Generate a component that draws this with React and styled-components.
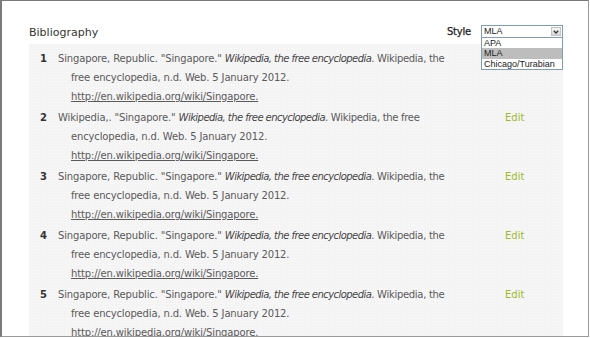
import React from "react";
import styled, { createGlobalStyle } from "styled-components";

const Global = createGlobalStyle`
  html, body { margin: 0; padding: 0; background: #fff; }
  body { font-family: "DejaVu Sans", sans-serif; }
`;

const Frame = styled.div`
  box-sizing: border-box;
  width: 589px;
  height: 337px;
  border: 1px solid #9a9a9a;
  border-top-color: #7a7a7a;
  border-left: 2px solid #7a7a7a;
  overflow: hidden;
  padding: 0 25px 0 27px;
  background: #fff;
`;

const Header = styled.div`
  display: flex;
  align-items: flex-start;
  justify-content: space-between;
  height: 43px;
  box-sizing: border-box;
  padding-top: 24px;
`;

const Title = styled.h1`
  margin: 0;
  font-size: 11px;
  font-weight: normal;
  color: #333;
  line-height: 16px;
`;

const StyleBox = styled.div`
  display: flex;
  align-items: center;
  gap: 10px;
  margin-top: 0;
`;

const StyleLabel = styled.span`
  font-size: 10px;
  color: #222;
  letter-spacing: -0.2px;
  -webkit-text-stroke: 0.25px #222;
`;

const SelectWrap = styled.div`
  position: relative;
  width: 82px;
`;

const SelectBox = styled.div`
  box-sizing: border-box;
  height: 13px;
  border: 1px solid #7f9db9;
  background: #fff;
  display: flex;
  align-items: stretch;
  font-family: "Liberation Sans", Arial, sans-serif;
  font-size: 9px;
  color: #222;
`;

const SelectValue = styled.span`
  flex: 1;
  padding-left: 2px;
  line-height: 11px;
`;

const ArrowBtn = styled.span`
  width: 10px;
  margin: 1px;
  background: linear-gradient(#f6f6f6, #d6d6d6);
  border: 1px solid #c4c4c4;
  box-sizing: border-box;
  display: flex;
  align-items: center;
  justify-content: center;
`;

const DropList = styled.ul`
  position: absolute;
  top: 12px;
  left: 0;
  right: 0;
  margin: 0;
  padding: 0;
  list-style: none;
  background: #fff;
  border: 1px solid #7f9db9;
  font-family: "Liberation Sans", Arial, sans-serif;
  font-size: 9px;
  color: #222;
  z-index: 2;
`;

const DropItem = styled.li`
  height: 10.3px;
  line-height: 10.3px;
  padding-left: 2px;
  background: ${(p) => (p.$active ? "#bdbdbd" : "transparent")};
`;

const Panel = styled.div`
  background-color: #f4f4f4;
  background-image: radial-gradient(#fafafa 0.6px, transparent 0.7px);
  background-size: 3px 3px;
  padding: 5px 0 0 11px;
  min-height: 300px;
`;

const Row = styled.div`
  display: grid;
  grid-template-columns: 18px 390px auto;
  align-items: start;
  line-height: 19px;
  margin-bottom: 2px;
`;

const Num = styled.span`
  font-size: 10px;
  font-weight: bold;
  color: #333;
`;

const Cite = styled.div`
  font-size: 10px;
  color: #5a5a5a;
  letter-spacing: -0.15px;
  white-space: nowrap;
`;

const CiteLine = styled.div`
  padding-left: ${(p) => (p.$cont ? "13px" : "0")};
`;

const Tail = styled.span`
  letter-spacing: -0.3px;
`;

const Title2 = styled.i`
  letter-spacing: -0.55px;
  color: #444;
`;

const Url = styled.span`
  text-decoration: underline;
  color: #5a5a5a;
`;

const Edit = styled.span`
  margin-left: 57px;
  font-size: 10px;
  color: #9cbb2a;
`;

const items = [
  { author: "Singapore, Republic.", tail: "Wikipedia, the", next: "free encyclopedia, n.d. Web. 5 January 2012." },
  { author: "Wikipedia,.", tail: "Wikipedia, the free", next: "encyclopedia, n.d. Web. 5 January 2012." },
  { author: "Singapore, Republic.", tail: "Wikipedia, the", next: "free encyclopedia, n.d. Web. 5 January 2012." },
  { author: "Singapore, Republic.", tail: "Wikipedia, the", next: "free encyclopedia, n.d. Web. 5 January 2012." },
  { author: "Singapore, Republic.", tail: "Wikipedia, the", next: "free encyclopedia, n.d. Web. 5 January 2012." },
];

export default function App() {
  return (
    <>
      <Global />
      <Frame>
        <Header>
          <Title>Bibliography</Title>
          <StyleBox>
            <StyleLabel>Style</StyleLabel>
            <SelectWrap>
              <SelectBox>
                <SelectValue>MLA</SelectValue>
                <ArrowBtn>
                  <svg width="6" height="4" viewBox="0 0 6 4">
                    <path d="M0.8 0.8 L3 3 L5.2 0.8" stroke="#333" strokeWidth="1.3" fill="none" />
                  </svg>
                </ArrowBtn>
              </SelectBox>
              <DropList>
                <DropItem>APA</DropItem>
                <DropItem $active>MLA</DropItem>
                <DropItem>Chicago/Turabian</DropItem>
              </DropList>
            </SelectWrap>
          </StyleBox>
        </Header>
        <Panel>
          {items.map((it, i) => (
            <Row key={i}>
              <Num>{i + 1}</Num>
              <Cite>
                <CiteLine>
                  {`${it.author} "Singapore." `}
                  <Title2>Wikipedia, the free encyclopedia</Title2>
                  <Tail>{`. ${it.tail}`}</Tail>
                </CiteLine>
                <CiteLine $cont>{it.next}</CiteLine>
                <CiteLine $cont>
                  <Url>http://en.wikipedia.org/wiki/Singapore.</Url>
                </CiteLine>
              </Cite>
              <Edit>Edit</Edit>
            </Row>
          ))}
        </Panel>
      </Frame>
    </>
  );
}
